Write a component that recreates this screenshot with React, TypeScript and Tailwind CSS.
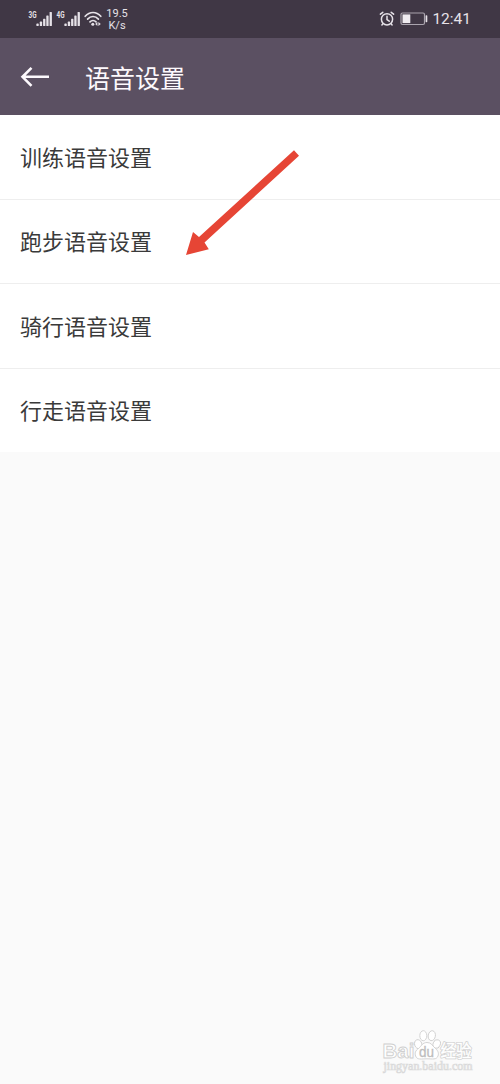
const items = ["训练语音设置", "跑步语音设置", "骑行语音设置", "行走语音设置"];

function Signal({ label }: { label: string }) {
  return (
    <svg width="25" height="20" viewBox="0 0 25 20" className="shrink-0">
      <text x="0.5" y="8.8" fontSize="8.5" fontWeight="700" textLength="8" lengthAdjust="spacingAndGlyphs" fill="#e6e2e8" className="font-['Roboto',sans-serif]">
        {label}
      </text>
      <g fill="#e6e2e8">
        <rect x="8.4" y="14.6" width="2.3" height="2.5" rx="0.6" />
        <rect x="11.8" y="12.6" width="2.3" height="4.5" rx="0.6" />
        <rect x="15.1" y="9.8" width="2.3" height="7.3" rx="0.6" />
        <rect x="18.3" y="6.4" width="2.3" height="10.7" rx="0.6" />
        <rect x="21.6" y="3" width="2.3" height="14.1" rx="0.6" />
      </g>
    </svg>
  );
}

function Wifi() {
  return (
    <svg width="18" height="20" viewBox="0 0 18 20" className="ml-[3px] shrink-0" fill="none" stroke="#e6e2e8" strokeWidth="1.7" strokeLinecap="round">
      <path d="M1.2 7.3C5.7 2.2 12.3 2.2 16.8 7.3" />
      <path d="M3.6 10.1C6.7 6.6 11.3 6.6 14.4 10.1" />
      <path d="M6 12.9C7.8 11 10.2 11 12 12.9" />
      <circle cx="8.8" cy="15.2" r="1.5" fill="#e6e2e8" stroke="none" />
      <path d="M13.4 12.9V17L11.2 15Z M14.4 12.9V17L16.8 15Z" fill="#e6e2e8" stroke="none" />
    </svg>
  );
}

function Alarm() {
  return (
    <svg width="16" height="16" viewBox="0 0 16 16" fill="none" stroke="#e6e2e8" strokeWidth="1.5" strokeLinecap="round">
      <circle cx="8" cy="8.3" r="5.6" />
      <path d="M8 5.3V8.6L10.2 10.2M1.4 3.2L3.8 1.3M14.6 3.2L12.2 1.3M3.9 12.8L2.9 14M12.1 12.8L13.1 14" />
    </svg>
  );
}

function Battery() {
  return (
    <svg width="28" height="14" viewBox="0 0 28 14" className="ml-[5px]">
      <rect x="1" y="1" width="23.5" height="11.5" rx="1.5" fill="none" stroke="#aaa4ae" strokeWidth="1.2" />
      <rect x="2.5" y="2.4" width="7.8" height="8.7" fill="#efebf0" />
      <rect x="25.6" y="3.2" width="1.7" height="7" rx="0.7" fill="#e6e2e8" />
    </svg>
  );
}

function Watermark() {
  return (
    <svg width="94" height="48" viewBox="0 0 94 48" fill="#fff" stroke="#cfcfcf" strokeWidth="0.9" className="absolute left-[381px] top-[1027px] font-['Liberation_Sans','Noto_Sans_CJK_SC',sans-serif]">
      <text x="1.5" y="30.5" fontSize="21" fontWeight="700" textLength="32" lengthAdjust="spacingAndGlyphs">Bai</text>
      <ellipse cx="37.2" cy="17.2" rx="3.6" ry="4.6" transform="rotate(-18 37.2 17.2)" />
      <ellipse cx="42.3" cy="8.7" rx="3.5" ry="5" />
      <ellipse cx="50.8" cy="8.7" rx="3.6" ry="5" transform="rotate(10 50.8 8.7)" />
      <ellipse cx="55.7" cy="17" rx="3.6" ry="4.4" transform="rotate(20 55.7 17)" />
      <path d="M46 15.5C41.5 15.5 40.5 19 37.5 21.5C34.5 23.5 33.5 26 34.6 29C36 33.2 40.5 31.8 46 31.8C51.5 31.8 55.5 33 57 29C58.2 25.8 56.5 23 54 21C51 18.5 50.5 15.5 46 15.5Z" />
      <text x="38" y="29.5" fontSize="14.5" textLength="15" lengthAdjust="spacingAndGlyphs" fill="#bdbdbd" stroke="#bdbdbd" strokeWidth="0.3">du</text>
      <g fontSize="16.5" strokeLinejoin="round">
        <text x="59.5" y="30" textLength="31" lengthAdjust="spacingAndGlyphs" stroke="#cfcfcf" strokeWidth="2">经验</text>
        <text x="59.5" y="30" textLength="31" lengthAdjust="spacingAndGlyphs" stroke="#fff" strokeWidth="0.4">经验</text>
      </g>
      <text x="2.5" y="42.5" fontSize="11.5" textLength="89" lengthAdjust="spacingAndGlyphs" strokeWidth="0.7" stroke="#d9d9d9" className="font-['Liberation_Serif',serif]">jingyan.baidu.com</text>
    </svg>
  );
}

export default function App() {
  return (
    <div className="relative flex h-[1084px] w-[500px] flex-col overflow-hidden bg-[#fafafa] font-['Roboto','Noto_Sans_CJK_SC',sans-serif]">
      <div className="flex h-[38px] shrink-0 items-center justify-between bg-[#403745] pl-[28px] pr-[29px] text-[#e6e2e8]">
        <div className="flex items-center">
          <Signal label="3G" />
          <div className="ml-[3px] flex"><Signal label="4G" /></div>
          <Wifi />
          <div className="ml-[4px] flex w-[22px] flex-col items-center pt-px text-[11px] leading-[12px]">
            <span>19.5</span>
            <span>K/s</span>
          </div>
        </div>
        <div className="flex items-center">
          <Alarm />
          <Battery />
          <span className="ml-[4px] pt-[2px] text-[15.5px] leading-none">12:41</span>
        </div>
      </div>
      <header className="flex h-[77px] shrink-0 items-center bg-[#5b5062] pl-[20px] text-[#fdf9fd]">
        <svg width="30" height="22" viewBox="0 0 30 22" fill="none" stroke="currentColor" strokeWidth="2.6">
          <path d="M29 10.8H2.5M11.5 1.8L2.5 10.8L11.5 19.8" />
        </svg>
        <h1 className="ml-[35px] pt-[5px] text-[25px] leading-none">语音设置</h1>
      </header>
      <main className="flex h-[337px] shrink-0 flex-col bg-white">
        {items.map((item) => (
          <div key={item} className="flex flex-1 items-center border-b border-[#eeeeee] pl-[20px] pt-[4px] text-[22px] leading-none text-[#3a3a3a] last:border-b-0">
            {item}
          </div>
        ))}
      </main>
      <svg width="120" height="112" viewBox="0 0 120 112" className="absolute left-[182px] top-[147px]" fill="#e64535">
        <path d="M112 3.2L117 8.7L22.5 95.5L26.8 102.3L4 108L11 85L17 90Z" />
      </svg>
      <Watermark />
    </div>
  );
}
